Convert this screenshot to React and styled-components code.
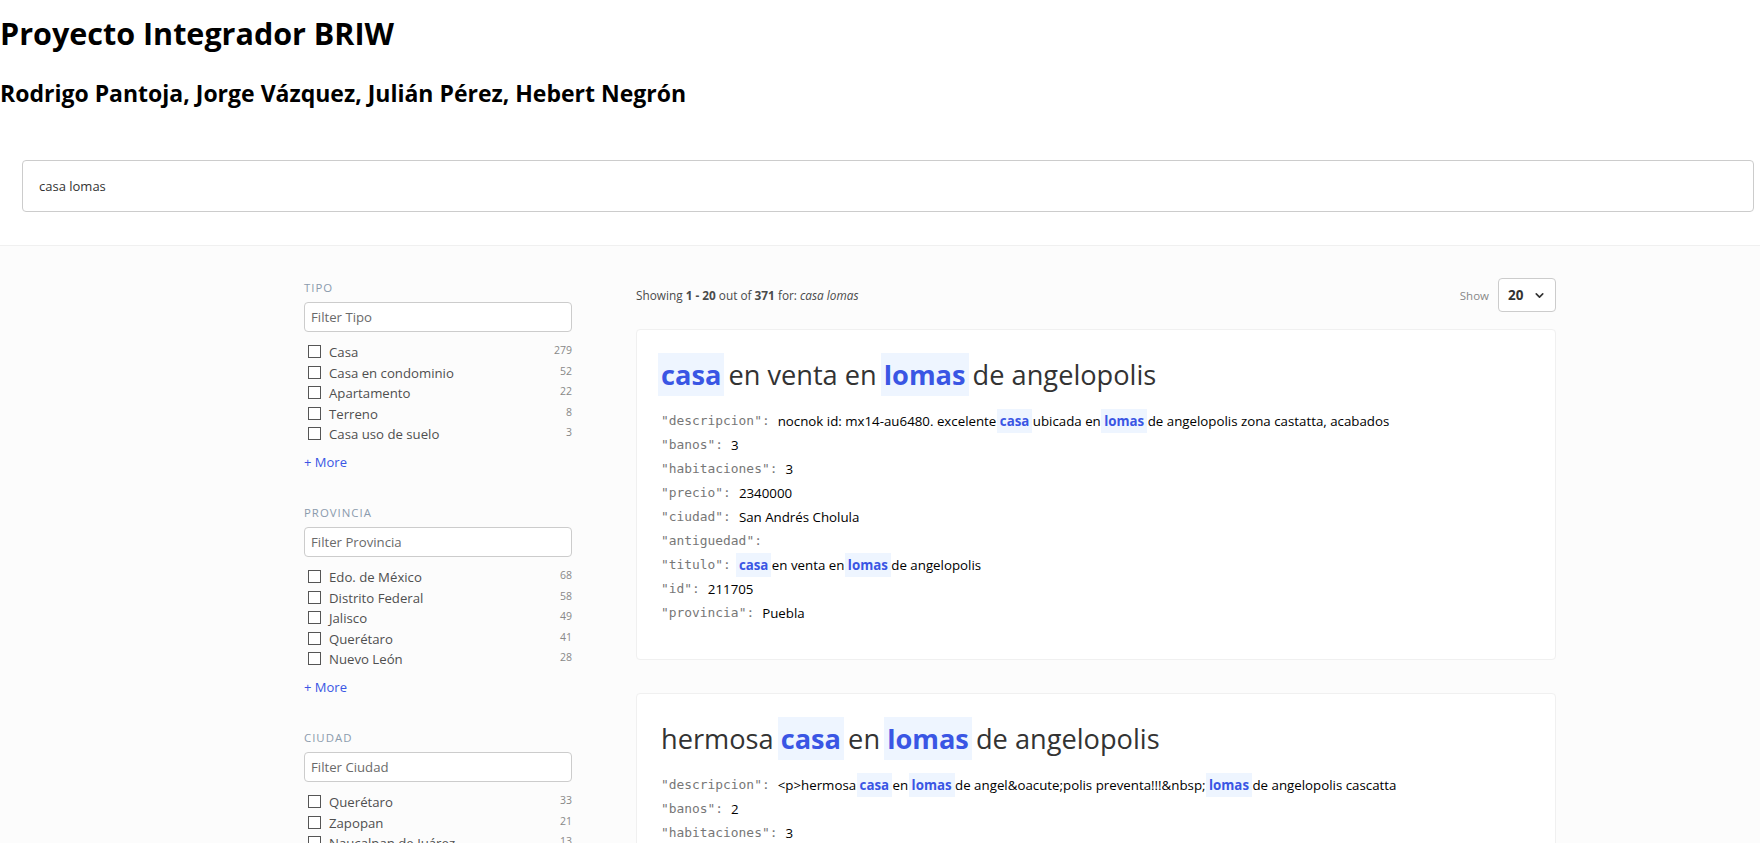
import React from "react";
import styled, { createGlobalStyle } from "styled-components";
import { ChevronDown } from "lucide-react";

const GlobalStyle = createGlobalStyle`
  html, body {
    margin: 0;
    padding: 0;
    background: #ffffff;
    font-family: "Open Sans", "Noto Sans", sans-serif;
    color: #333333;
  }
  * {
    box-sizing: border-box;
  }
`;

const Header = styled.header`
  background: #ffffff;
  border-bottom: 1px solid #f0f0f0;
  padding-bottom: 33px;
`;

const Title = styled.h1`
  margin: 13px 0 0;
  font-size: 30.5px;
  line-height: 40px;
  font-weight: 700;
  color: #000000;
`;

const Authors = styled.h2`
  margin: 25px 0 0;
  font-size: 23px;
  line-height: 30px;
  font-weight: 700;
  color: #000000;
`;

const SearchWrap = styled.div`
  margin: 52px 6px 0 22px;
`;

const SearchInput = styled.input`
  display: block;
  width: 100%;
  height: 52px;
  padding: 0 16px;
  border: 1px solid #cccccc;
  border-radius: 4px;
  font-family: inherit;
  font-size: 13px;
  color: #333333;
  background: #ffffff;
  outline: none;
`;

const Body = styled.main`
  background: #fcfcfc;
  min-height: calc(100vh - 246px);
`;

const Inner = styled.div`
  display: flex;
  width: 1252px;
  margin-left: 304px;
`;

const Sidebar = styled.aside`
  width: 300px;
  flex-shrink: 0;
  padding: 34px 32px 0 0;
`;

const Facet = styled.section`
  margin-bottom: 34.5px;
`;

const FacetTitle = styled.div`
  font-size: 11.4px;
  line-height: 16px;
  letter-spacing: 1px;
  text-transform: uppercase;
  color: #8b9bad;
  margin-bottom: 6px;
`;

const FacetSearch = styled.input`
  display: block;
  width: 100%;
  height: 30px;
  padding: 0 6px;
  border: 1px solid #cccccc;
  border-radius: 4px;
  font-family: inherit;
  font-size: 13.2px;
  color: #333333;
  background: #ffffff;
  outline: none;
  &::placeholder {
    color: #6a6a6a;
  }
`;

const OptionList = styled.ul`
  list-style: none;
  margin: 9px 0 0;
  padding: 0;
`;

const Option = styled.li`
  display: flex;
  align-items: flex-start;
  height: 20.5px;
  padding-left: 4px;
`;

const Box = styled.span`
  width: 13px;
  height: 13px;
  margin-top: 4px;
  border: 1px solid #555555;
  background: #ffffff;
  flex-shrink: 0;
`;

const OptionLabel = styled.span`
  flex: 1;
  margin-left: 8px;
  font-size: 13.2px;
  line-height: 22px;
  color: #4f4f4f;
  white-space: nowrap;
`;

const OptionCount = styled.span`
  font-size: 10.5px;
  line-height: 18px;
  color: #888888;
`;

const More = styled.div`
  margin-top: 9px;
  font-size: 13px;
  line-height: 18px;
  color: #3a56e4;
  cursor: pointer;
`;

const Main = styled.div`
  flex: 1;
  padding: 32px 0 40px 32px;
`;

const ResultsHead = styled.div`
  display: flex;
  align-items: center;
  justify-content: space-between;
  height: 34px;
  margin-bottom: 17px;
  font-size: 11.8px;
  color: #4a4b4b;
  strong {
    font-weight: 700;
  }
  em {
    font-style: italic;
  }
`;

const ShowBox = styled.div`
  display: flex;
  align-items: center;
  gap: 9px;
`;

const ShowLabel = styled.span`
  font-size: 11.5px;
  color: #888888;
`;

const Select = styled.div`
  display: flex;
  align-items: center;
  justify-content: space-between;
  width: 58px;
  height: 34px;
  padding: 0 9px 0 9px;
  border: 1px solid #cccccc;
  border-radius: 4px;
  background: #ffffff;
  font-size: 13.5px;
  font-weight: 700;
  color: #333333;
`;

const Card = styled.article`
  background: #ffffff;
  border: 1px solid #f0f0f0;
  border-radius: 4px;
  padding: 24px 24px 34px;
  & + & {
    margin-top: 33px;
  }
`;

const CardTitle = styled.h3`
  margin: 0 0 13px;
  font-size: 27.2px;
  line-height: 42px;
  font-weight: 400;
  color: #333333;
`;

const Hl = styled.em`
  font-style: normal;
  font-weight: 700;
  color: #3a56e4;
  background: #eef5ff;
  padding: 3px;
  margin: 0 -3px;
`;

const Fields = styled.ul`
  list-style: none;
  margin: 0;
  padding: 0;
`;

const Field = styled.li`
  display: flex;
  align-items: center;
  height: 24px;
  line-height: 18px;
  white-space: nowrap;
`;

const Key = styled.span`
  font-family: "DejaVu Sans Mono", "Liberation Mono", monospace;
  font-size: 12.9px;
  color: #777777;
  margin-right: 8px;
`;

const Value = styled.span`
  font-size: 13.3px;
  color: #000000;
`;

const highlight = (text) =>
  text.split(/\b(casa|lomas)\b/gi).map((part, i) =>
    i % 2 === 1 ? <Hl key={i}>{part}</Hl> : part
  );

const facets = [
  {
    name: "Tipo",
    options: [
      ["Casa", 279],
      ["Casa en condominio", 52],
      ["Apartamento", 22],
      ["Terreno", 8],
      ["Casa uso de suelo", 3],
    ],
  },
  {
    name: "Provincia",
    options: [
      ["Edo. de México", 68],
      ["Distrito Federal", 58],
      ["Jalisco", 49],
      ["Querétaro", 41],
      ["Nuevo León", 28],
    ],
  },
  {
    name: "Ciudad",
    options: [
      ["Querétaro", 33],
      ["Zapopan", 21],
      ["Naucalpan de Juárez", 13],
      ["Huixquilucan", 12],
      ["Puebla", 10],
    ],
  },
];

const results = [
  {
    title: "casa en venta en lomas de angelopolis",
    fields: [
      ["descripcion", "nocnok id: mx14-au6480. excelente casa ubicada en lomas de angelopolis zona castatta, acabados"],
      ["banos", "3"],
      ["habitaciones", "3"],
      ["precio", "2340000"],
      ["ciudad", "San Andrés Cholula"],
      ["antiguedad", ""],
      ["titulo", "casa en venta en lomas de angelopolis"],
      ["id", "211705"],
      ["provincia", "Puebla"],
    ],
  },
  {
    title: "hermosa casa en lomas de angelopolis",
    fields: [
      ["descripcion", "<p>hermosa casa en lomas de angel&oacute;polis preventa!!!&nbsp; lomas de angelopolis cascatta"],
      ["banos", "2"],
      ["habitaciones", "3"],
      ["precio", "2150000"],
      ["ciudad", "San Andrés Cholula"],
      ["antiguedad", ""],
      ["titulo", "hermosa casa en lomas de angelopolis"],
      ["id", "212034"],
      ["provincia", "Puebla"],
    ],
  },
];

const App = () => {
  return (
    <>
      <GlobalStyle />
      <Header>
        <Title>Proyecto Integrador BRIW</Title>
        <Authors>Rodrigo Pantoja, Jorge Vázquez, Julián Pérez, Hebert Negrón</Authors>
        <SearchWrap>
          <SearchInput defaultValue="casa lomas" />
        </SearchWrap>
      </Header>
      <Body>
        <Inner>
          <Sidebar>
            {facets.map((facet) => (
              <Facet key={facet.name}>
                <FacetTitle>{facet.name}</FacetTitle>
                <FacetSearch placeholder={"Filter " + facet.name} />
                <OptionList>
                  {facet.options.map(([label, count]) => (
                    <Option key={label}>
                      <Box />
                      <OptionLabel>{label}</OptionLabel>
                      <OptionCount>{count}</OptionCount>
                    </Option>
                  ))}
                </OptionList>
                <More>+ More</More>
              </Facet>
            ))}
          </Sidebar>
          <Main>
            <ResultsHead>
              <span>
                Showing <strong>1 - 20</strong> out of <strong>371</strong> for:{" "}
                <em>casa lomas</em>
              </span>
              <ShowBox>
                <ShowLabel>Show</ShowLabel>
                <Select>
                  20
                  <ChevronDown size={13} strokeWidth={3} color="#333" />
                </Select>
              </ShowBox>
            </ResultsHead>
            {results.map((r) => (
              <Card key={r.title}>
                <CardTitle>{highlight(r.title)}</CardTitle>
                <Fields>
                  {r.fields.map(([k, v]) => (
                    <Field key={k}>
                      <Key>"{k}":</Key>
                      <Value>{highlight(v)}</Value>
                    </Field>
                  ))}
                </Fields>
              </Card>
            ))}
          </Main>
        </Inner>
      </Body>
    </>
  );
};

export default App;
